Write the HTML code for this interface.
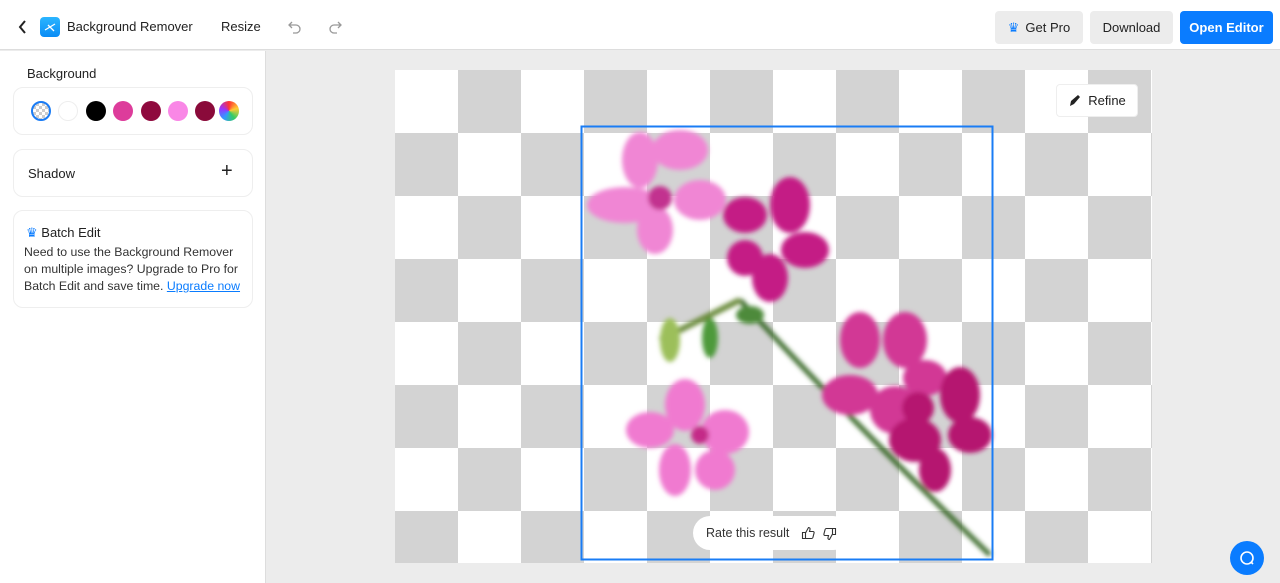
<!DOCTYPE html>
<html><head><meta charset="utf-8"><style>
*{box-sizing:border-box;margin:0;padding:0}
body{width:1280px;height:583px;overflow:hidden;background:#ececec;font-family:"Liberation Sans",sans-serif;color:#222;position:relative}
.top{position:absolute;left:0;top:0;width:1280px;height:50px;background:#fff;border-bottom:1px solid #ddd}
.side{position:absolute;left:0;top:51px;width:266px;height:532px;background:#fff;border-right:1px solid #ddd}
.card{position:absolute;left:13px;width:240px;border:1px solid #eee;border-radius:10px;background:#fff}
.btn{position:absolute;top:11px;height:33px;border-radius:4px;font-size:13px;display:flex;align-items:center;justify-content:center}
.dot{position:absolute;top:101px;width:20px;height:20px;border-radius:50%}
</style></head><body>
<div class="top">
<svg style="position:absolute;left:18px;top:20px" width="10" height="14"><path d="M7 1L2 7l5 6" stroke="#222" stroke-width="2" fill="none"/></svg>
<div style="position:absolute;left:40px;top:17px;width:20px;height:20px;border-radius:4px;background:linear-gradient(#2bb5ff,#0a8cf5)"><svg width="20" height="20"><path d="M5 13l10-6M8 8l6 6" stroke="#fff" stroke-width="1.3"/></svg></div>
<div style="position:absolute;left:67px;top:19px;font-size:13px">Background Remover</div>
<div style="position:absolute;left:221px;top:19px;font-size:13px">Resize</div>
<svg style="position:absolute;left:287px;top:20px" width="16" height="14"><path d="M5 2L2 5l3 3M2 5h7a4 4 0 010 8H6" stroke="#999" stroke-width="1.3" fill="none"/></svg>
<svg style="position:absolute;left:327px;top:20px" width="16" height="14"><path d="M11 2l3 3-3 3M14 5H7a4 4 0 000 8h3" stroke="#999" stroke-width="1.3" fill="none"/></svg>
<div class="btn" style="left:995px;width:88px;background:#ececec"><span style="color:#0a7cff;margin-right:6px">♛</span>Get Pro</div>
<div class="btn" style="left:1090px;width:83px;background:#ececec">Download</div>
<div class="btn" style="left:1180px;width:93px;background:#0a7cff;color:#fff;font-weight:bold">Open Editor</div>
</div>
<div class="side">
<div style="position:absolute;left:27px;top:15px;font-size:13px">Background</div>
</div>
<div class="card" style="top:87px;height:48px"></div>
<div class="dot" style="left:31px;border:2px solid #1a7cf5;background:repeating-conic-gradient(#ccc 0 25%,#fff 0 50%) 0 0/6px 6px"></div>
<div class="dot" style="left:58px;border:1px solid #eee;background:#fff"></div>
<div class="dot" style="left:86px;background:#000"></div>
<div class="dot" style="left:113px;background:#dd3c9b"></div>
<div class="dot" style="left:141px;background:#8f0a3e"></div>
<div class="dot" style="left:168px;background:#f987e6"></div>
<div class="dot" style="left:195px;background:#8a0a3a"></div>
<div class="dot" style="left:219px;background:conic-gradient(#f33,#fc3,#3c6,#39f,#93f,#f33)"></div>
<div class="card" style="top:149px;height:48px"><span style="position:absolute;left:14px;top:16px;font-size:13px">Shadow</span><span style="position:absolute;left:207px;top:10px;font-size:20px">+</span></div>
<div class="card" style="top:210px;height:98px;font-size:12.3px;line-height:17px;color:#333">
<div style="position:absolute;left:12px;top:13px;color:#222;font-size:13px"><span style="color:#0a7cff">♛</span> Batch Edit</div>
<div style="position:absolute;left:10px;top:33px;width:222px">Need to use the Background Remover on multiple images? Upgrade to Pro for Batch Edit and save time. <span style="color:#0a7cff;text-decoration:underline">Upgrade now</span></div>
</div>
<div style="position:absolute;left:395px;top:70px;width:757px;height:493px;background:repeating-conic-gradient(#d3d3d3 0 25%,#fff 0 50%) 0 0/126px 126px"></div>
<svg style="position:absolute;left:0;top:0" width="1280" height="583">
<defs><filter id="b"><feGaussianBlur stdDeviation="2.5"/></filter></defs>
<g filter="url(#b)">
<path d="M740 300 Q850 420 990 555" stroke="#3b6b2a" stroke-width="5" fill="none"/>
<path d="M740 300 L660 340" stroke="#6a8a3a" stroke-width="6"/>
<ellipse cx="670" cy="340" rx="10" ry="22" fill="#9cbf5a"/><ellipse cx="710" cy="338" rx="8" ry="20" fill="#4d9a3a"/><ellipse cx="750" cy="315" rx="14" ry="9" fill="#4d8a3a"/>
<g fill="#f086d4"><ellipse cx="625" cy="205" rx="38" ry="18"/><ellipse cx="680" cy="150" rx="28" ry="20"/><ellipse cx="640" cy="160" rx="18" ry="28"/><ellipse cx="700" cy="200" rx="26" ry="20"/><ellipse cx="655" cy="230" rx="18" ry="24"/></g>
<circle cx="660" cy="198" r="12" fill="#c2308f"/>
<g fill="#c41d85"><ellipse cx="790" cy="205" rx="20" ry="28"/><ellipse cx="745" cy="215" rx="22" ry="18"/><ellipse cx="805" cy="250" rx="24" ry="18"/><ellipse cx="770" cy="278" rx="18" ry="24"/><ellipse cx="745" cy="258" rx="18" ry="18"/></g>
<g fill="#d23895"><ellipse cx="860" cy="340" rx="20" ry="28"/><ellipse cx="905" cy="340" rx="22" ry="28"/><ellipse cx="850" cy="395" rx="28" ry="20"/><ellipse cx="895" cy="410" rx="25" ry="24"/><ellipse cx="925" cy="378" rx="22" ry="18"/></g>
<g fill="#b5176f"><ellipse cx="960" cy="395" rx="20" ry="28"/><ellipse cx="970" cy="435" rx="22" ry="18"/><ellipse cx="915" cy="440" rx="26" ry="22"/><ellipse cx="935" cy="470" rx="16" ry="22"/><ellipse cx="918" cy="408" rx="16" ry="16"/></g>
<g fill="#f07ad0"><ellipse cx="685" cy="405" rx="20" ry="26"/><ellipse cx="650" cy="430" rx="24" ry="18"/><ellipse cx="725" cy="432" rx="24" ry="22"/><ellipse cx="675" cy="470" rx="16" ry="26"/><ellipse cx="715" cy="470" rx="20" ry="20"/></g>
<circle cx="700" cy="435" r="9" fill="#c42a88"/>
</g>
<rect x="581.5" y="126.5" width="411" height="433" fill="none" stroke="#1a7cf5" stroke-width="2"/>
</svg>
<div style="position:absolute;left:1056px;top:84px;width:82px;height:33px;background:#fff;border:1px solid #eee;border-radius:4px;font-size:13px;display:flex;align-items:center;justify-content:center"><svg width="14" height="14" style="margin-right:6px"><path d="M2 12l4-2 6-7-2-2-7 6z" fill="#222"/></svg>Refine</div>
<div style="position:absolute;left:693px;top:516px;width:157px;height:34px;background:#fff;border-radius:17px;font-size:12.5px;color:#333;padding:10px 0 0 13px">Rate this result
<svg style="position:absolute;left:108px;top:10px" width="14" height="14"><path d="M1.5 6.5h3v6h-3zM4.5 7l3-5.5c1.2 0 1.8.8 1.5 2l-.5 2h3.5c.8 0 1.3.7 1.1 1.4l-1.2 4.6c-.2.6-.6 1-1.2 1H4.5" stroke="#333" stroke-width="1.1" fill="none"/></svg>
<svg style="position:absolute;left:130px;top:11px" width="14" height="14"><g transform="rotate(180 7 7)"><path d="M1.5 6.5h3v6h-3zM4.5 7l3-5.5c1.2 0 1.8.8 1.5 2l-.5 2h3.5c.8 0 1.3.7 1.1 1.4l-1.2 4.6c-.2.6-.6 1-1.2 1H4.5" stroke="#333" stroke-width="1.1" fill="none"/></g></svg>
</div>
<div style="position:absolute;left:1230px;top:541px;width:34px;height:34px;border-radius:50%;background:#0a7cff"><svg width="34" height="34"><circle cx="17" cy="17" r="6" stroke="#fff" stroke-width="1.6" fill="none"/><path d="M21 21l2 2" stroke="#fff" stroke-width="1.6"/></svg></div>
</body></html>
